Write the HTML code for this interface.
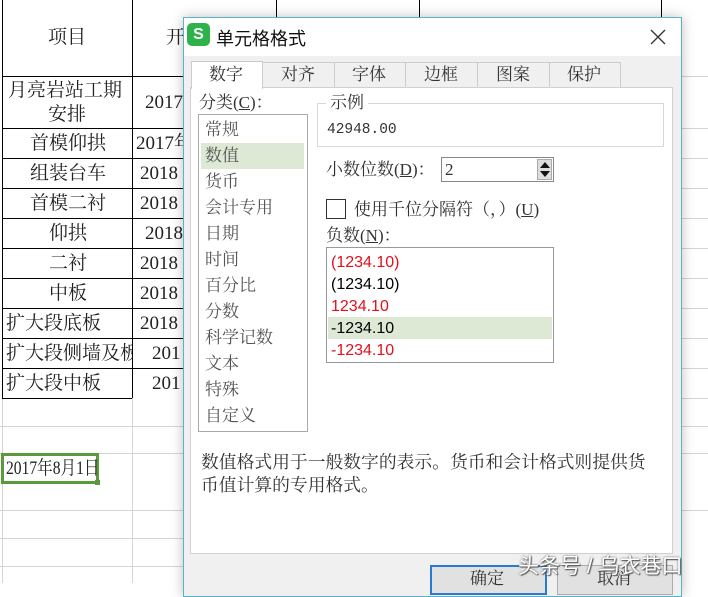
<!DOCTYPE html>
<html><head><meta charset="utf-8"><style>
*{margin:0;padding:0;box-sizing:border-box}
body{width:708px;height:583px;overflow:hidden;background:#fff;position:relative;font-family:"Liberation Serif","Noto Serif CJK SC",serif;color:#222}
.a{position:absolute}
.h{position:absolute;height:1px;background:#000}
.v{position:absolute;width:1px;background:#000}
.gh{position:absolute;height:1px;background:#d4d4d4}
.gv{position:absolute;width:1px;background:#d4d4d4}
.t{position:absolute;font-size:19px;white-space:nowrap;line-height:22px}
.d{font-family:"Liberation Serif","Noto Serif CJK SC",serif;font-size:17px;white-space:nowrap;position:absolute;line-height:20px;color:#333}
.n{font-family:"Liberation Sans",sans-serif;font-size:16px;position:absolute;left:4px;line-height:20px}
</style></head><body>
<div class="gv" style="left:2px;top:0;height:583px"></div>
<div class="v" style="left:2px;top:0;height:398px"></div>
<div class="v" style="left:132px;top:0;height:398px"></div>
<div class="gv" style="left:132px;top:398px;height:185px"></div>
<div class="v" style="left:276px;top:0;height:17px"></div>
<div class="v" style="left:419px;top:0;height:17px"></div>
<div class="v" style="left:661px;top:0;height:17px"></div>
<div class="h" style="left:2px;top:76px;width:181px"></div>
<div class="h" style="left:2px;top:128px;width:181px"></div>
<div class="h" style="left:2px;top:158px;width:181px"></div>
<div class="h" style="left:2px;top:188px;width:181px"></div>
<div class="h" style="left:2px;top:218px;width:181px"></div>
<div class="h" style="left:2px;top:248px;width:181px"></div>
<div class="h" style="left:2px;top:278px;width:181px"></div>
<div class="h" style="left:2px;top:308px;width:181px"></div>
<div class="h" style="left:2px;top:338px;width:181px"></div>
<div class="h" style="left:2px;top:368px;width:181px"></div>
<div class="h" style="left:2px;top:398px;width:130px"></div>
<div class="gh" style="left:0;top:426px;width:183px"></div>
<div class="gh" style="left:0;top:453px;width:183px"></div>
<div class="gh" style="left:0;top:510px;width:183px"></div>
<div class="gh" style="left:0;top:538px;width:183px"></div>
<div class="gh" style="left:0;top:566px;width:183px"></div>
<div class="gh" style="left:682px;top:76px;width:26px"></div>
<div class="gh" style="left:682px;top:128px;width:26px"></div>
<div class="gh" style="left:682px;top:158px;width:26px"></div>
<div class="gh" style="left:682px;top:188px;width:26px"></div>
<div class="gh" style="left:682px;top:218px;width:26px"></div>
<div class="gh" style="left:682px;top:248px;width:26px"></div>
<div class="gh" style="left:682px;top:278px;width:26px"></div>
<div class="gh" style="left:682px;top:308px;width:26px"></div>
<div class="gh" style="left:682px;top:338px;width:26px"></div>
<div class="gh" style="left:682px;top:368px;width:26px"></div>
<div class="gh" style="left:682px;top:398px;width:26px"></div>
<div class="gh" style="left:682px;top:426px;width:26px"></div>
<div class="gh" style="left:682px;top:453px;width:26px"></div>
<div class="gh" style="left:682px;top:510px;width:26px"></div>
<div class="t" style="left:48px;top:27px">项目</div>
<div class="t" style="left:166px;top:27px">开</div>
<div class="t" style="left:8px;top:80px">月亮岩站工期</div>
<div class="t" style="left:48px;top:104px">安排</div>
<div class="t" style="left:145px;top:92px">2017</div>
<div class="t" style="left:30px;top:133px">首模仰拱</div><div class="t" style="left:136px;top:133px">2017年</div>
<div class="t" style="left:30px;top:163px">组装台车</div><div class="t" style="left:140px;top:163px">2018</div>
<div class="t" style="left:30px;top:193px">首模二衬</div><div class="t" style="left:140px;top:193px">2018</div>
<div class="t" style="left:49px;top:223px">仰拱</div><div class="t" style="left:145px;top:223px">2018</div>
<div class="t" style="left:49px;top:253px">二衬</div><div class="t" style="left:140px;top:253px">2018</div>
<div class="t" style="left:49px;top:283px">中板</div><div class="t" style="left:140px;top:283px">2018</div>
<div class="t" style="left:6px;top:313px">扩大段底板</div><div class="t" style="left:140px;top:313px">2018</div>
<div class="t" style="left:6px;top:343px;width:126px;overflow:hidden">扩大段侧墙及板</div><div class="t" style="left:152px;top:343px">201</div>
<div class="t" style="left:6px;top:373px">扩大段中板</div><div class="t" style="left:152px;top:373px">201</div>
<div class="a" style="left:1px;top:453px;width:98px;height:31px;border:3px solid #5b9a3c"></div>
<div class="a" style="left:95px;top:480px;width:5px;height:5px;background:#5b9a3c"></div>
<div class="t" style="left:6px;top:458px;transform:scaleX(0.82);transform-origin:0 0">2017年8月1日</div>

<div class="a" style="left:183px;top:17px;width:499px;height:580px;background:#f0f0f0;border:1px solid #5ab4c8;box-shadow:0 0 12px rgba(0,0,0,.25)">
 <div class="a" style="left:0;top:0;width:497px;height:38px;background:#fff"></div>
 <div class="a" style="left:3px;top:5px;width:23px;height:23px;background:#2eb24a;border-radius:5px;color:#fff;font:bold 16px 'Liberation Sans',sans-serif;text-align:center;line-height:23px">S</div>
 <div class="a" style="left:32px;top:7px;font-family:'Liberation Sans','Noto Sans CJK SC',sans-serif;font-size:18px;color:#111">单元格格式</div>
 <svg class="a" style="left:465px;top:10px" width="18" height="18"><path d="M2 2L16 16M16 2L2 16" stroke="#333" stroke-width="1.3"/></svg>
</div>
<div class="a" style="left:262px;top:62px;width:358px;height:26px;background:#f0f0f0"></div>
<div class="a" style="left:262px;top:62px;width:73px;height:26px;border:1px solid #ccc;border-bottom:none"></div>
<div class="a" style="left:334px;top:62px;width:72px;height:26px;border:1px solid #ccc;border-bottom:none"></div>
<div class="a" style="left:405px;top:62px;width:73px;height:26px;border:1px solid #ccc;border-bottom:none"></div>
<div class="a" style="left:477px;top:62px;width:73px;height:26px;border:1px solid #ccc;border-bottom:none"></div>
<div class="a" style="left:549px;top:62px;width:72px;height:26px;border:1px solid #ccc;border-bottom:none"></div>
<div class="a" style="left:190px;top:87px;width:483px;height:467px;background:#fff;border:1px solid #d0d0d0"></div>
<div class="a" style="left:191px;top:61px;width:72px;height:28px;background:#fff;border:1px solid #ccc;border-bottom:none"></div>
<div class="d" style="left:209px;top:65px">数字</div>
<div class="d" style="left:281px;top:65px">对齐</div>
<div class="d" style="left:352px;top:65px">字体</div>
<div class="d" style="left:424px;top:65px">边框</div>
<div class="d" style="left:496px;top:65px">图案</div>
<div class="d" style="left:567px;top:65px">保护</div>

<div class="d" style="left:199px;top:93px">分类(<u>C</u>)：</div>
<div class="a" style="left:198px;top:114px;width:110px;height:318px;border:1px solid #aaa;background:#fff"></div>
<div class="a" style="left:201px;top:143px;width:103px;height:26px;background:#dde9d5"></div>
<div class="d" style="left:205px;top:120px;color:#555">常规</div>
<div class="d" style="left:205px;top:146px;color:#555">数值</div>
<div class="d" style="left:205px;top:172px;color:#555">货币</div>
<div class="d" style="left:205px;top:198px;color:#555">会计专用</div>
<div class="d" style="left:205px;top:224px;color:#555">日期</div>
<div class="d" style="left:205px;top:250px;color:#555">时间</div>
<div class="d" style="left:205px;top:276px;color:#555">百分比</div>
<div class="d" style="left:205px;top:302px;color:#555">分数</div>
<div class="d" style="left:205px;top:328px;color:#555">科学记数</div>
<div class="d" style="left:205px;top:354px;color:#555">文本</div>
<div class="d" style="left:205px;top:380px;color:#555">特殊</div>
<div class="d" style="left:205px;top:406px;color:#555">自定义</div>

<div class="a" style="left:317px;top:103px;width:347px;height:44px;border:1px solid #d8d8d8"></div>
<div class="d" style="left:326px;top:93px;background:#fff;padding:0 4px">示例</div>
<div class="d" style="left:327px;top:120px;font-family:'Liberation Mono',monospace;font-size:14.5px">42948.00</div>
<div class="d" style="left:326px;top:160px">小数位数(<u>D</u>)：</div>
<div class="a" style="left:441px;top:157px;width:113px;height:25px;border:1px solid #888;background:#fff"></div>
<div class="d" style="left:445px;top:160px">2</div>
<div class="a" style="left:537px;top:159px;width:15px;height:21px;background:#ddd;border:1px solid #aaa"></div>
<svg class="a" style="left:538px;top:160px" width="14" height="20"><path d="M7 2L12 8H2Z M2 11H12L7 17Z" fill="#111"/></svg>
<div class="a" style="left:326px;top:199px;width:20px;height:20px;border:1px solid #333;background:#fff"></div>
<div class="d" style="left:354px;top:200px">使用千位分隔符（，）(<u>U</u>)</div>
<div class="d" style="left:326px;top:226px">负数(<u>N</u>)：</div>
<div class="a" style="left:326px;top:247px;width:228px;height:116px;border:1px solid #999;background:#fff">
 <div class="a" style="left:1px;top:69px;width:224px;height:22px;background:#dde9d5"></div>
 <div class="n" style="top:5px;color:#e0101c">(1234.10)</div>
 <div class="n" style="top:27px;color:#000">(1234.10)</div>
 <div class="n" style="top:49px;color:#e0101c">1234.10</div>
 <div class="n" style="top:71px;color:#000">-1234.10</div>
 <div class="n" style="top:93px;color:#e0101c">-1234.10</div>
</div>
<div class="d" style="left:201px;top:452px;font-size:17.8px">数值格式用于一般数字的表示。货币和会计格式则提供货</div>
<div class="d" style="left:201px;top:475px;font-size:17.8px">币值计算的专用格式。</div>

<div class="a" style="left:430px;top:565px;width:117px;height:30px;border:2px solid #2a7ad0;background:#e1e1e1"></div>
<div class="a" style="left:557px;top:565px;width:116px;height:30px;border:1px solid #adadad;background:#e1e1e1"></div>
<div class="d" style="left:470px;top:569px">确定</div>
<div class="d" style="left:597px;top:569px">取消</div>
<div class="a" style="left:518px;top:550px;font-family:'Liberation Sans','Noto Sans CJK SC',sans-serif;font-size:21px;color:#fff;text-shadow:0 0 2px #555,1px 1px 1px #555;white-space:nowrap">头条号 / 乌衣巷口</div>
</body></html>
